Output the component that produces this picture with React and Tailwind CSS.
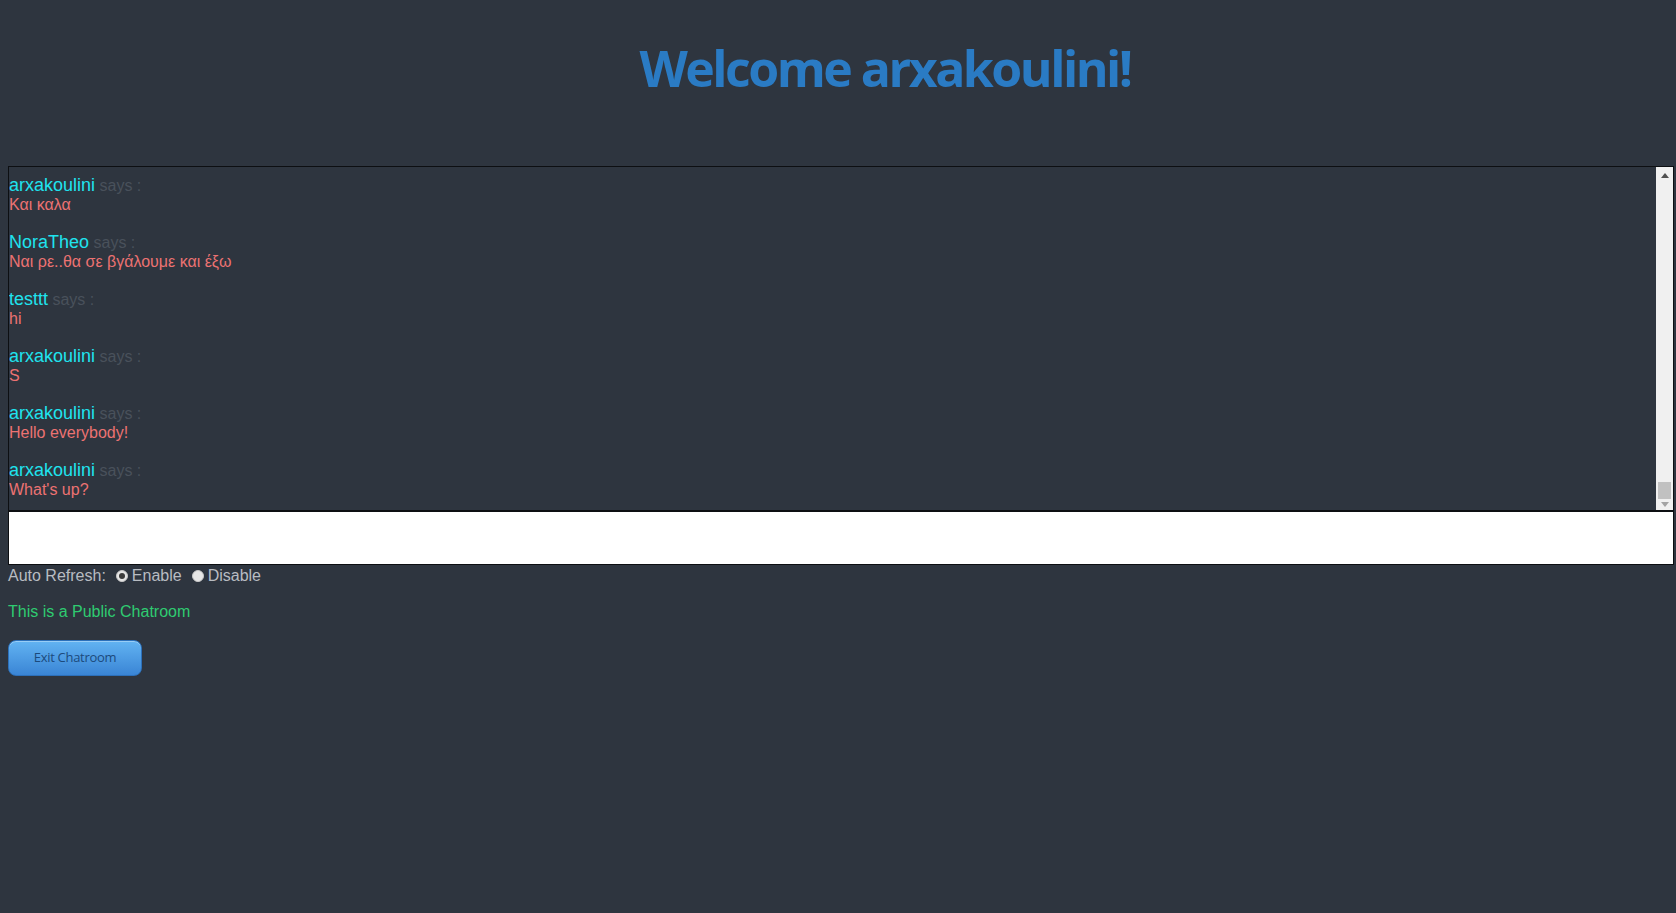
const messages = [
  { user: "arxakoulini", text: "Και καλα" },
  { user: "NoraTheo", text: "Ναι ρε..θα σε βγάλουμε και έξω" },
  { user: "testtt", text: "hi" },
  { user: "arxakoulini", text: "S" },
  { user: "arxakoulini", text: "Hello everybody!" },
  { user: "arxakoulini", text: "What's up?" },
];

function Radio({ checked }) {
  return (
    <span className="w-[12px] h-[12px] rounded-full bg-[#e6e6e6] border border-[#c8c8c8] flex items-center justify-center">
      {checked && <span className="w-[6px] h-[6px] rounded-full bg-[#3c3c3c]" />}
    </span>
  );
}

function Scrollbar() {
  return (
    <div className="w-[17px] bg-[#f0f0f0] flex flex-col justify-between">
      <div className="h-[17px] flex items-center justify-center">
        <svg width="8" height="5" viewBox="0 0 8 5">
          <path d="M0 5 L4 0 L8 5 Z" fill="#505050" />
        </svg>
      </div>
      <div className="flex flex-col">
        <div className="mx-[2px] h-[17px] bg-[#c1c1c1]" />
        <div className="h-[11px] flex items-center justify-center">
          <svg width="8" height="5" viewBox="0 0 8 5">
            <path d="M0 0 L4 5 L8 0 Z" fill="#a3a3a3" />
          </svg>
        </div>
      </div>
    </div>
  );
}

export default function App() {
  return (
    <div className="min-h-[913px] bg-[#2e353f] font-['Liberation_Sans',Arial,sans-serif]">
      <div className="h-[166px] pl-[94px] pt-[34px] text-center">
        <h1 className="font-['Open_Sans',sans-serif] font-bold text-[50px] leading-[68px] tracking-[-2.5px] text-[#2a7bc4]">
          Welcome arxakoulini!
        </h1>
      </div>

      <div className="ml-2 w-[1666px]">
        <div className="h-[345px] border border-[#0d0f12] flex">
          <div className="flex-1 pt-[9px] overflow-hidden">
            {messages.map((m, i) => (
              <div key={i} className="mb-[19px]">
                <div className="h-[19px] leading-[19px] whitespace-nowrap">
                  <span className="text-[18px] text-[#1fe3ee]">{m.user}</span>
                  <span className="text-[16px] text-[#49515b]"> says :</span>
                </div>
                <div className="h-[19px] leading-[19px] text-[16px] text-[#ec7272]">{m.text}</div>
              </div>
            ))}
          </div>
          <Scrollbar />
        </div>
        <div className="h-[54px] bg-white border border-[#0d0f12]" />
      </div>

      <div className="ml-2 h-[21px] flex items-center text-[16px] text-[#b8bcc2]">
        <span>Auto Refresh:</span>
        <span className="ml-[10px]"><Radio checked /></span>
        <span className="ml-[4px]">Enable</span>
        <span className="ml-[10px]"><Radio /></span>
        <span className="ml-[4px]">Disable</span>
      </div>

      <p className="ml-2 mt-[16px] h-[19px] leading-[19px] text-[16px] text-[#2ecc71]">This is a Public Chatroom</p>

      <button className="ml-2 mt-[19px] w-[134px] h-[36px] rounded-[8px] border border-[#2c70ba] bg-gradient-to-b from-[#62b3f2] to-[#3a85d5] shadow-[inset_0_1px_0_rgba(255,255,255,0.35)] font-['Open_Sans',sans-serif] text-[13px] tracking-[-0.3px] text-[#1c4a7c]">
        Exit Chatroom
      </button>
    </div>
  );
}
